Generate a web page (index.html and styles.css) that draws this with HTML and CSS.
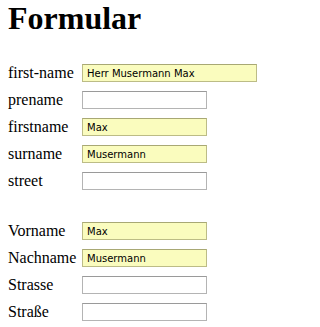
FILE: index.html
```html
<!DOCTYPE html>
<html lang="de">
<head>
<meta charset="utf-8">
<title>Formular</title>
<link rel="stylesheet" href="styles.css">
</head>
<body>
<h1 class="title">Formular</h1>
<form class="form">
  <div class="group">
    <label class="label" for="f1">first-name</label>
    <input class="field wide filled" id="f1" type="text" value="Herr Musermann Max">
    <label class="label" for="f2">prename</label>
    <input class="field" id="f2" type="text">
    <label class="label" for="f3">firstname</label>
    <input class="field filled" id="f3" type="text" value="Max">
    <label class="label" for="f4">surname</label>
    <input class="field filled" id="f4" type="text" value="Musermann">
    <label class="label" for="f5">street</label>
    <input class="field" id="f5" type="text">
  </div>
  <div class="group group-second">
    <label class="label" for="g1">Vorname</label>
    <input class="field filled" id="g1" type="text" value="Max">
    <label class="label" for="g2">Nachname</label>
    <input class="field filled" id="g2" type="text" value="Musermann">
    <label class="label" for="g3">Strasse</label>
    <input class="field" id="g3" type="text">
    <label class="label" for="g4">Straße</label>
    <input class="field" id="g4" type="text">
  </div>
</form>
</body>
</html>
```
FILE: styles.css
```css
html, body {
  margin: 0;
  padding: 0;
  background: #ffffff;
}

body {
  padding: 0 8px;
  font-family: "Liberation Serif", "Times New Roman", serif;
  color: #000000;
}

.title {
  margin: 0;
  font-size: 32px;
  line-height: normal;
  font-weight: bold;
}

.form {
  margin: 27px 0 0 0;
}

.group {
  display: grid;
  grid-template-columns: 74px auto;
  grid-auto-rows: 18px;
  row-gap: 9px;
  align-items: center;
  justify-items: start;
}

.group-second {
  margin-top: 32px;
}

.label {
  font-size: 16px;
  line-height: 18px;
  white-space: nowrap;
}

.field {
  box-sizing: border-box;
  width: 125px;
  height: 18px;
  margin: 0;
  padding: 0 4px;
  font-family: "DejaVu Sans", "Verdana", sans-serif;
  font-size: 10px;
  color: #000000;
  background: #ffffff;
  border: 1px solid #b4b4b4;
  border-top-color: #9a9a9a;
  border-radius: 0;
  outline: none;
}

.field.wide {
  width: 175px;
}

.field.filled {
  background: #fafcbe;
  border-color: #bcbc86;
  border-top-color: #a8a874;
}
```
